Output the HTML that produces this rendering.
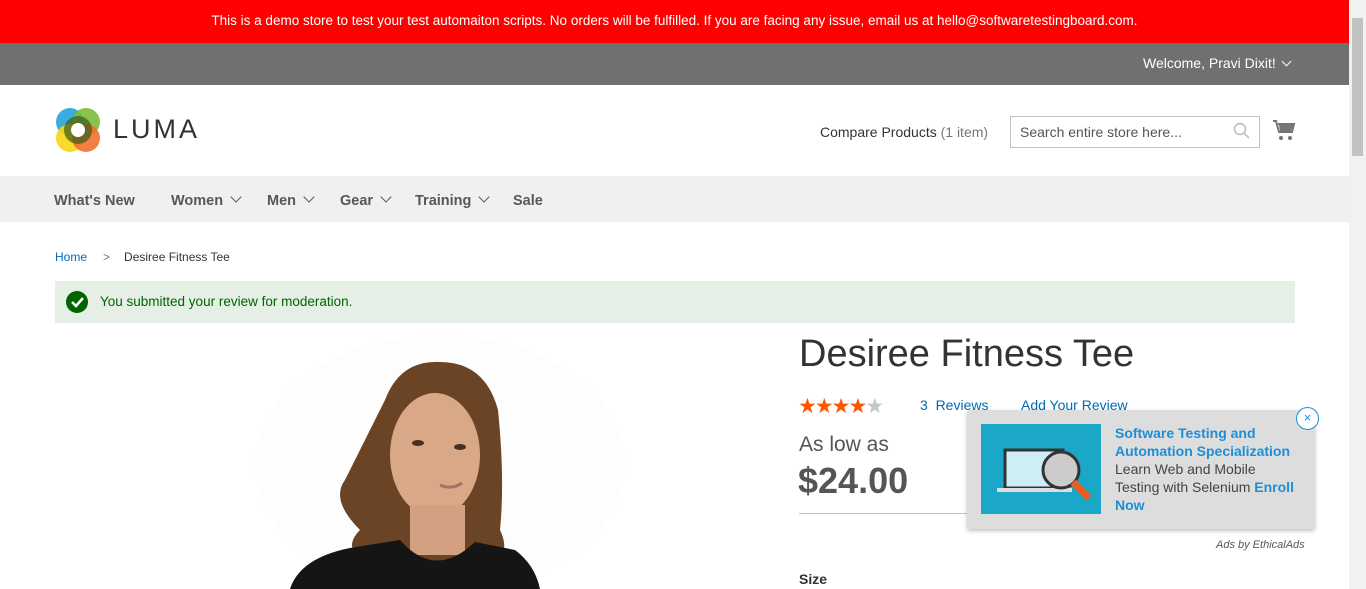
<!DOCTYPE html>
<html><head><meta charset="utf-8"><style>
*{box-sizing:border-box;margin:0;padding:0}
body{width:1366px;height:589px;overflow:hidden;background:#fff;font-family:"Liberation Sans",sans-serif;color:#333;position:relative}
.a{position:absolute}
.red{left:0;top:0;width:1349px;height:43px;background:#f00;color:#fff;font-size:13.5px;text-align:center;line-height:42px}
.gray{left:0;top:43px;width:1349px;height:42px;background:#6e716e;color:#fff;font-size:14px}
.nav{left:0;top:176px;width:1349px;height:46px;background:#f0f0f0;font-size:14.5px;font-weight:bold;color:#575757}
.nav span{position:absolute;top:17px}
.sb{left:1349px;top:0;width:17px;height:589px;background:#f1f1f1}
.sb div{position:absolute;left:3px;top:18px;width:11px;height:138px;background:#c1c1c1}
.chev{display:inline-block;width:8px;height:8px;border-right:1.5px solid #575757;border-bottom:1.5px solid #575757;transform:rotate(45deg);margin-left:9px;position:relative;top:-4px}
</style></head><body>
<div class="a red">This is a demo store to test your test automaiton scripts. No orders will be fulfilled. If you are facing any issue, email us at hello@softwaretestingboard.com.</div>
<div class="a gray"><span class="a" style="left:1143px;top:12px">Welcome, Pravi Dixit! <span class="chev" style="border-color:#fff;width:7px;height:7px;margin-left:3px;top:-3px"></span></span></div>
<svg class="a" style="left:55px;top:107px" width="46" height="46" viewBox="0 0 46 46">
<circle cx="15" cy="15" r="14" fill="#25a3dc" opacity=".9"/><circle cx="31" cy="15" r="14" fill="#7cbb3c" opacity=".9"/>
<circle cx="15" cy="31" r="14" fill="#f7d614" opacity=".9"/><circle cx="31" cy="31" r="14" fill="#f0702e" opacity=".9"/>
<circle cx="23" cy="23" r="14" fill="#3d5a1a" opacity=".7"/><circle cx="23" cy="23" r="7" fill="#fff"/></svg>
<div class="a" style="left:113px;top:114px;font-size:27px;letter-spacing:3px;color:#333">LUMA</div>
<div class="a" style="left:820px;top:124px;font-size:14px">Compare Products <span style="color:#777">(1 item)</span></div>
<div class="a" style="left:1010px;top:116px;width:250px;height:32px;border:1px solid #c2c2c2;font-size:14px;color:#555;padding:7px 9px">Search entire store here...</div>
<svg class="a" style="left:1233px;top:122px" width="18" height="18"><circle cx="7" cy="7" r="5.5" fill="none" stroke="#bbb" stroke-width="1.5"/><line x1="11" y1="11" x2="16" y2="16" stroke="#bbb" stroke-width="1.5"/></svg>
<svg class="a" style="left:1272px;top:119px" width="24" height="24" viewBox="0 0 24 24"><path d="M1 2h3l3 11h13l2-8H6" fill="none" stroke="#757575" stroke-width="2"/><path d="M7 6h14l-2 6H8z" fill="#757575"/><circle cx="9" cy="19" r="2" fill="#757575"/><circle cx="18" cy="19" r="2" fill="#757575"/></svg>
<div class="a nav"><span style="left:54px">What's New</span><span style="left:171px">Women<i class="chev"></i></span><span style="left:267px">Men<i class="chev"></i></span><span style="left:340px">Gear<i class="chev"></i></span><span style="left:415px">Training<i class="chev"></i></span><span style="left:513px">Sale</span></div>
<div class="a" style="left:55px;top:250px;font-size:12px"><span style="color:#006bb4">Home</span><span style="margin:0 14px 0 16px;color:#777">&gt;</span>Desiree Fitness Tee</div>
<div class="a" style="left:55px;top:281px;width:1240px;height:42px;background:#e5efe5;color:#006400;font-size:13.5px;padding:13px 0 0 45px">You submitted your review for moderation.</div>
<svg class="a" style="left:66px;top:291px" width="22" height="22"><circle cx="11" cy="11" r="11" fill="#006400"/><path d="M6 11l4 4 7-8" fill="none" stroke="#fff" stroke-width="2.5"/></svg>
<svg class="a" style="left:250px;top:330px" width="380" height="259" viewBox="0 0 380 259">
<ellipse cx="190" cy="135" rx="185" ry="130" fill="#fdfdfd"/>
<path d="M135 70 Q150 30 190 32 Q235 32 248 80 Q255 150 250 200 Q262 225 240 235 L120 235 Q90 220 110 200 Q80 170 95 150 Q110 120 135 70z" fill="#6b4426"/>
<ellipse cx="185" cy="125" rx="45" ry="62" fill="#d8a887"/>
<path d="M160 175 h55 v50 h-55z" fill="#d3a182"/>
<path d="M40 259 Q50 228 100 218 L150 210 Q185 250 225 212 L265 220 Q285 235 290 259z" fill="#151515"/>
<path d="M190 155 q12 5 22 -2" stroke="#b06b6b" stroke-width="3" fill="none"/>
<ellipse cx="168" cy="113" rx="6" ry="3" fill="#4a3020"/><ellipse cx="210" cy="117" rx="6" ry="3" fill="#4a3020"/>
</svg>
<div class="a" style="left:799px;top:333px;font-size:38px;font-weight:300;color:#333">Desiree Fitness Tee</div>
<div class="a" style="left:798px;top:394px;font-size:21px;letter-spacing:-2px"><span style="color:#ff5501">★★★★</span><span style="color:#c7c7c7">★</span></div>
<div class="a" style="left:920px;top:397px;font-size:14px;color:#006bb4">3 &nbsp;Reviews</div>
<div class="a" style="left:1021px;top:397px;font-size:14px;color:#006bb4">Add Your Review</div>
<div class="a" style="left:799px;top:433px;font-size:21px;color:#555">As low as</div>
<div class="a" style="left:798px;top:460px;font-size:36px;font-weight:bold;color:#555">$24.00</div>
<div class="a" style="left:799px;top:513px;width:200px;height:1px;background:#c1c1c1"></div>
<div class="a" style="left:799px;top:571px;font-size:14px;font-weight:bold">Size</div>
<div class="a" style="left:967px;top:410px;width:348px;height:119px;background:#ddd;border-radius:3px;box-shadow:0 2px 4px rgba(0,0,0,.25)"></div>
<svg class="a" style="left:981px;top:424px" width="120" height="90"><rect width="120" height="90" fill="#1ba8c8"/><rect x="24" y="26" width="58" height="38" fill="#cfeff7" stroke="#333" stroke-width="3"/><rect x="16" y="64" width="75" height="4" fill="#ddd"/><circle cx="80" cy="46" r="18" fill="#ccc" stroke="#333" stroke-width="3"/><line x1="92" y1="58" x2="108" y2="74" stroke="#f05a1a" stroke-width="7"/></svg>
<div class="a" style="left:1115px;top:424px;font-size:14px;line-height:18px;color:#444;width:185px"><b style="color:#1e8fd6">Software Testing and Automation Specialization</b> Learn Web and Mobile Testing with Selenium <b style="color:#1e8fd6">Enroll Now</b></div>
<div class="a" style="left:1296px;top:407px;width:23px;height:23px;border-radius:50%;border:1.5px solid #1e8fd6;background:#fff;color:#1e8fd6;font-size:13px;text-align:center;line-height:19px">×</div>
<div class="a" style="left:1216px;top:539px;font-size:11px;font-style:italic;color:#555">Ads by EthicalAds</div>
<div class="a sb"><div></div></div>
</body></html>
